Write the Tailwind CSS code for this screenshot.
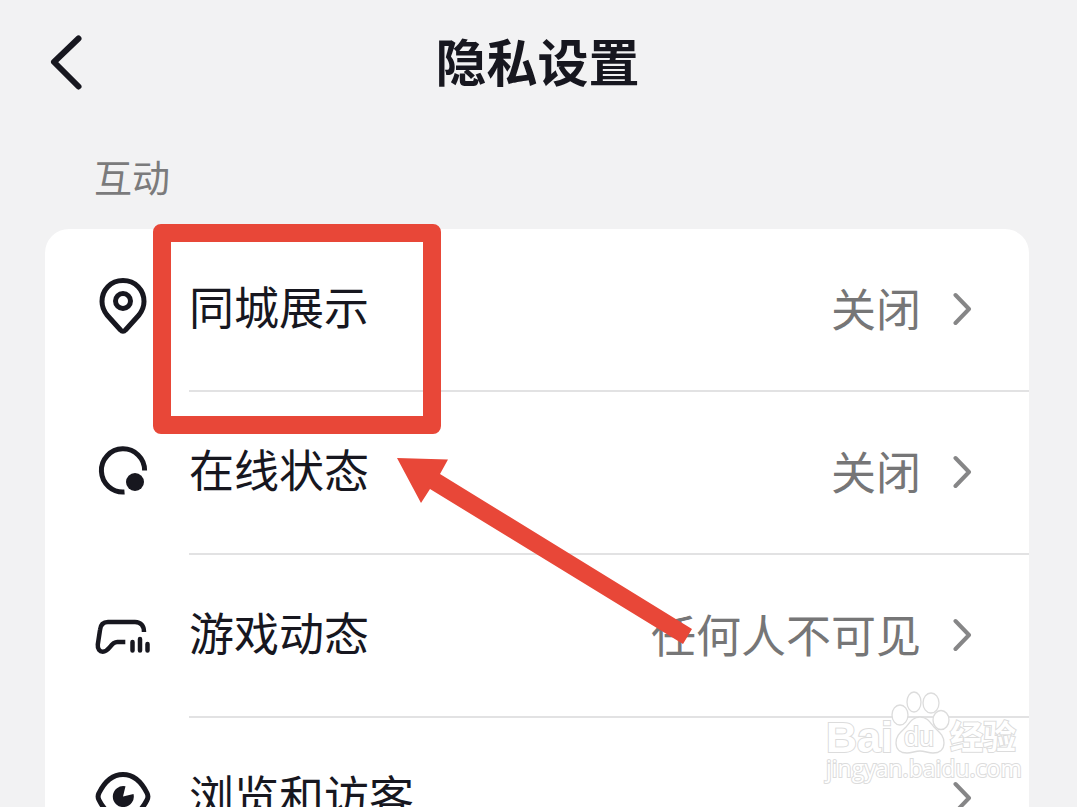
<!DOCTYPE html>
<html lang="zh-CN">
<head>
    <meta charset="UTF-8">
    <meta name="viewport" content="width=device-width, initial-scale=1.0">
    <title>隐私设置</title>
    <script src="https://cdn.jsdelivr.net/npm/@tailwindcss/browser@4"></script>
</head>
<body class="relative h-screen overflow-hidden bg-[#f2f2f3] text-[#17171f] font-['Noto_Sans_CJK_SC',sans-serif]">
    <!-- Header -->
    <header class="grid grid-cols-[1fr_auto_1fr] items-center h-[126px] pl-12 pr-[50px]">
        <button class="justify-self-start" aria-label="返回">
            <svg class="w-9 h-15" viewBox="0 0 36 60" fill="none" stroke="currentColor" stroke-width="6" stroke-linecap="round" stroke-linejoin="round">
                <path d="M30.500 5.500 6 29l24.500 24.500"/>
            </svg>
        </button>
        <h1 class="pb-1.5 text-[51px] leading-[60px] font-bold">隐私设置</h1>
    </header>

    <main class="pl-[45px] pr-12">
        <h2 class="h-[103px] pl-[49px] pt-[22px] text-[38px] leading-[56px] text-[#7b7b7c]">互动</h2>

        <!-- Settings -->
        <ul class="rounded-t-3xl bg-white text-[45px] leading-[64px]">
            <li>
                <a href="#" class="flex h-[163px] pl-[50px] gap-[38px]">
                    <svg class="w-14 h-14 mt-[49px] shrink-0" viewBox="0 0 56 56" fill="none" stroke="currentColor" stroke-width="5" stroke-linejoin="round">
                        <path d="M28 2.500C15.500 2.500 7 12 7 23.500c0 5.500 2 9.500 5 13.500l13.500 15c1.500 1.800 3.500 1.800 5 0L44 37c3-4 5-8 5-13.500C49 12 40.500 2.500 28 2.500Z"/>
                        <circle cx="28" cy="23" r="7.500"/>
                    </svg>
                    <span class="flex flex-1 items-center justify-between pr-14 border-b-2 border-[#e2e2e3]">
                        <span class="pb-2">同城展示</span>
                        <span class="flex items-center gap-8 text-[#767677]">
                            <span class="pb-1">关闭</span>
                            <svg class="w-5 h-9" viewBox="0 0 20 36" fill="none" stroke="#868687" stroke-width="4" stroke-linecap="round" stroke-linejoin="round"><path d="M2.500 3 16 17 2.500 31"/></svg>
                        </span>
                    </span>
                </a>
            </li>
            <li>
                <a href="#" class="flex h-[163px] pl-[50px] gap-[38px]">
                    <svg class="w-14 h-14 mt-[49px] shrink-0" viewBox="0 0 56 56" fill="none" stroke="currentColor" stroke-width="5">
                        <path d="M29.500 51A21.600 21.600 0 1 1 49.600 29.500"/>
                        <circle cx="40" cy="41" r="9" fill="currentColor" stroke="none"/>
                    </svg>
                    <span class="flex flex-1 items-center justify-between pr-14 border-b-2 border-[#e2e2e3]">
                        <span class="pb-2">在线状态</span>
                        <span class="flex items-center gap-8 text-[#767677]">
                            <span class="pb-1">关闭</span>
                            <svg class="w-5 h-9" viewBox="0 0 20 36" fill="none" stroke="#868687" stroke-width="4" stroke-linecap="round" stroke-linejoin="round"><path d="M2.500 3 16 17 2.500 31"/></svg>
                        </span>
                    </span>
                </a>
            </li>
            <li>
                <a href="#" class="flex h-[163px] pl-[50px] gap-[38px]">
                    <svg class="w-14 h-14 mt-[49px] shrink-0" viewBox="0 0 56 56" fill="none" stroke="currentColor" stroke-width="4.500">
                        <path d="M49 28c0-6-3-10-9-10H13c-5 0-7.500 3-8 8L2.800 40.500c-.4 5 2 7.200 5 7.200 3.500 0 5-2 7-4.500 2.500-3.500 4-5.200 7.500-5.200h8"/>
                        <path d="M37.500 38v8.500M45 35v11.500M52.500 40v6.500" stroke-linecap="round"/>
                    </svg>
                    <span class="flex flex-1 items-center justify-between pr-14 border-b-2 border-[#e2e2e3]">
                        <span class="pb-2">游戏动态</span>
                        <span class="flex items-center gap-8 text-[#767677]">
                            <span class="pb-1">任何人不可见</span>
                            <svg class="w-5 h-9" viewBox="0 0 20 36" fill="none" stroke="#868687" stroke-width="4" stroke-linecap="round" stroke-linejoin="round"><path d="M2.500 3 16 17 2.500 31"/></svg>
                        </span>
                    </span>
                </a>
            </li>
            <li>
                <a href="#" class="flex h-[163px] pl-[50px] gap-[38px]">
                    <svg class="w-14 h-14 mt-[49px] shrink-0" viewBox="0 0 56 56" fill="none" stroke="currentColor" stroke-width="5" stroke-linejoin="round">
                        <path d="M4 26C10 14 18 7.500 28 7.500S46 14 52 26c1.300 2.500 1.300 4.500 0 7C46 45 38 50.500 28 50.500S10 45 4 33c-1.300-2.500-1.300-4.500 0-7Z"/>
                        <path d="M28 29.500 30.500 19.300A10.500 10.500 0 1 0 38.500 27Z" fill="currentColor" stroke="none"/>
                    </svg>
                    <span class="flex flex-1 items-center justify-between pr-14 border-b-2 border-[#e2e2e3]">
                        <span class="pb-2">浏览和访客</span>
                        <svg class="w-5 h-9" viewBox="0 0 20 36" fill="none" stroke="#868687" stroke-width="4" stroke-linecap="round" stroke-linejoin="round"><path d="M2.500 3 16 17 2.500 31"/></svg>
                    </span>
                </a>
            </li>
        </ul>
    </main>

    <!-- Highlight box and arrow -->
    <div class="absolute left-[153px] top-[224px] w-[288px] h-[210px] rounded-lg border-[18px] border-[#e84738] pointer-events-none"></div>
    <svg class="absolute left-[397px] top-[457px] w-[296px] h-[188px] pointer-events-none" viewBox="0 0 296 188" fill="#e84738">
        <path d="M0 1 51 2.500 43 17 295 172 286 187 33 32 24 46Z"/>
    </svg>

    <!-- Watermark -->
    <svg class="absolute left-[820px] top-[686px] w-[210px] h-[104px] pointer-events-none" viewBox="0 0 210 104" fill="#fff" stroke="#dcdcdc" stroke-width="2">
        <text x="6" y="66" class="font-['Liberation_Sans',sans-serif] text-[43px] font-bold [paint-order:stroke]">Bai</text>
        <g stroke-width="1.300">
            <ellipse cx="80" cy="29" rx="8" ry="10"/>
            <ellipse cx="94" cy="16" rx="7" ry="10"/>
            <ellipse cx="111" cy="17" rx="8" ry="10"/>
            <ellipse cx="121" cy="34" rx="8" ry="9.500"/>
            <path d="M100 31c-7 0-10 5-14 10-5 5-10 8-10 16 0 7 5 10 11 10 5 0 8-2 13-2s8 2 13 2c6 0 11-3 11-10 0-8-5-11-10-16-4-5-7-10-14-10Z"/>
        </g>
        <text x="84" y="60" class="font-['Liberation_Sans',sans-serif] text-[27px] [paint-order:stroke]">du</text>
        <text x="130" y="63" class="text-[33px] font-bold [paint-order:stroke]">经验</text>
        <text x="6" y="91" class="font-['Open_Sans',sans-serif] text-[23px] [paint-order:stroke]">jingyan.baidu.com</text>
    </svg>
</body>
</html>
